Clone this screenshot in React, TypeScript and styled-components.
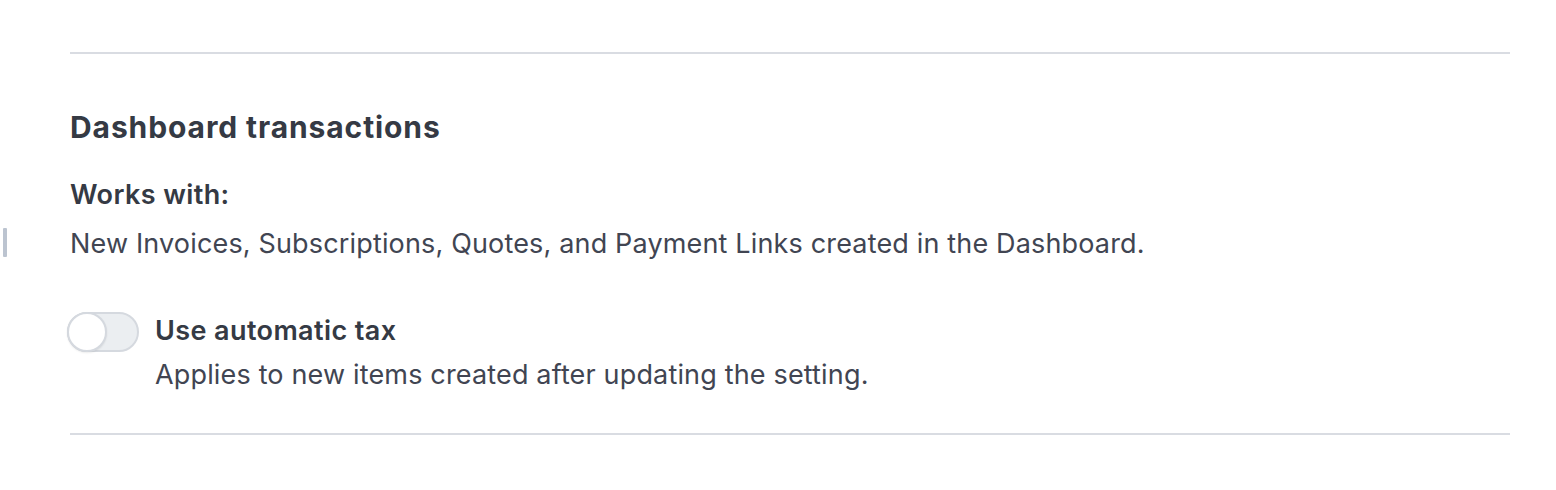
import { FC, useState } from 'react';
import styled, { createGlobalStyle } from 'styled-components';

const Global = createGlobalStyle`
    html, body {
        margin: 0;
        padding: 0;
        background: #ffffff;
    }
    body {
        font-family: Inter, "Noto Sans", "Liberation Sans", sans-serif;
        -webkit-font-smoothing: antialiased;
    }
`;

const Page = styled.div`
    position: relative;
    width: 1556px;
    height: 490px;
    padding: 52px 46px 0px 70px;
    box-sizing: border-box;
`;

// little scroll marker on the left edge
const Marker = styled.div`
    position: absolute;
    left: 3px;
    top: 228px;
    width: 4px;
    height: 29px;
    border-radius: 1px;
    background-color: #bcc4d0;
`;

const Rule = styled.hr`
    margin: 0;
    border: none;
    height: 2px;
    background-color: #d9dce2;
`;

const Section = styled.section`
    display: flex;
    flex-direction: column;
    padding: 55px 0px 40px 0px;
`;

const Heading = styled.h2`
    margin: 0;
    font-size: 30px;
    line-height: 36px;
    font-weight: 700;
    letter-spacing: 0.9px;
    color: #353a44;
`;

const Label = styled.div<{ $top?: number }>`
    margin-top: ${p => p.$top ?? 0}px;
    font-size: 27px;
    line-height: 36px;
    font-weight: 600;
    letter-spacing: 0.4px;
    color: #353a44;
`;

const Body = styled.p<{ $top?: number }>`
    margin: ${p => p.$top ?? 0}px 0px 0px 0px;
    font-size: 27px;
    line-height: 36px;
    font-weight: 400;
    letter-spacing: 0.16px;
    color: #414552;
`;

const ToggleRow = styled.div`
    display: flex;
    align-items: flex-start;
    gap: 16px;
    margin-top: 51px;
`;

const Track = styled.button<{ $on: boolean }>`
    position: relative;
    flex: none;
    width: 72px;
    height: 40px;
    margin-top: -1px;
    margin-left: -3px;
    padding: 0;
    border-radius: 20px;
    border: 2px solid #d5d9df;
    background-color: ${p => (p.$on ? '#635bff' : '#ebeef1')};
    box-sizing: border-box;
    cursor: pointer;
    outline: none;
`;

const Knob = styled.span<{ $on: boolean }>`
    position: absolute;
    top: -2px;
    left: ${p => (p.$on ? '30px' : '-2px')};
    width: 40px;
    height: 40px;
    border-radius: 50%;
    border: 2px solid #d5d9df;
    background-color: #ffffff;
    box-sizing: border-box;
    box-shadow: 0px 1px 2px rgba(0, 0, 0, 0.08);
`;

const ToggleText = styled.div`
    display: flex;
    flex-direction: column;
    gap: 8px;
`;

const App: FC = () => {
    const [on, setOn] = useState(false);
    return (
        <>
            <Global />
            <Page>
                <Marker />
                <Rule />
                <Section>
                    <Heading>Dashboard transactions</Heading>
                    <Label $top={32}>Works with:</Label>
                    <Body $top={13}>New Invoices, Subscriptions, Quotes, and Payment Links created in the Dashboard.</Body>
                    <ToggleRow>
                        <Track $on={on} onClick={() => setOn(!on)} aria-label="Use automatic tax">
                            <Knob $on={on} />
                        </Track>
                        <ToggleText>
                            <Label>Use automatic tax</Label>
                            <Body>Applies to new items created after updating the setting.</Body>
                        </ToggleText>
                    </ToggleRow>
                </Section>
                <Rule />
            </Page>
        </>
    );
};

export default App;
